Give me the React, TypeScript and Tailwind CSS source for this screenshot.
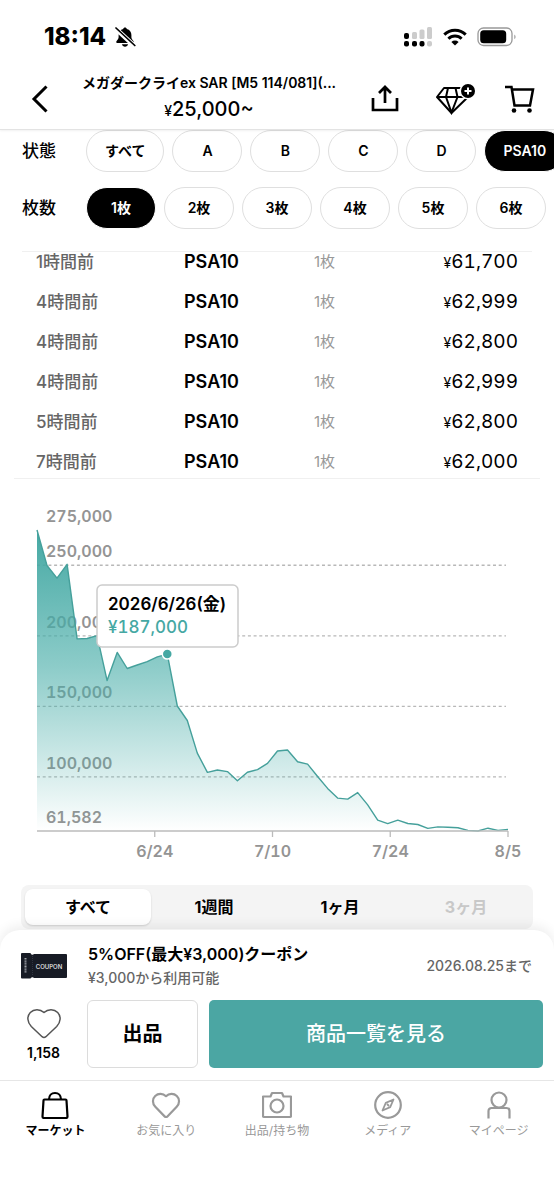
import { useState } from "react";
import type { ReactNode } from "react";

const CONDITIONS = ["すべて", "A", "B", "C", "D", "PSA10"];
const QUANTITIES = ["1枚", "2枚", "3枚", "4枚", "5枚", "6枚"];

const SALES = [
  { time: "1時間前", grade: "PSA10", count: "1枚", price: "61,700" },
  { time: "4時間前", grade: "PSA10", count: "1枚", price: "62,999" },
  { time: "4時間前", grade: "PSA10", count: "1枚", price: "62,800" },
  { time: "4時間前", grade: "PSA10", count: "1枚", price: "62,999" },
  { time: "5時間前", grade: "PSA10", count: "1枚", price: "62,800" },
  { time: "7時間前", grade: "PSA10", count: "1枚", price: "62,000" },
];

const PRICES = [
  275000, 249800, 240900, 250700, 197800, 198100, 200100, 168200, 188200, 176800, 179300, 181700,
  185000, 187000, 150200, 139900, 116800, 103100, 104800, 103700, 97200, 103300, 105100, 109500,
  118300, 119000, 110700, 109000, 100200, 91800, 84900, 84200, 88800, 80100, 69300, 66800, 69300,
  66900, 66200, 63400, 64500, 64300, 63900, 62000, 61582, 63600, 62000, 62700,
];

const Y_LABELS = [275000, 250000, 200000, 150000, 100000, 61582];
const X_LABELS = ["6/24", "7/10", "7/24", "8/5"];
const RANGES = ["すべて", "1週間", "1ヶ月", "3ヶ月"];

/* ── Chart geometry ── */
const LEFT = 37;
const RIGHT = 508;
const TOP = 51;
const BOTTOM = 352;
const MAX = 275000;
const MIN = 61582;
const SELECTED = 13;

const toX = (i: number) => LEFT + (i * (RIGHT - LEFT)) / (PRICES.length - 1);
const toY = (price: number) => BOTTOM - ((price - MIN) / (MAX - MIN)) * (BOTTOM - TOP);

function StatusBar() {
  return (
    <div className="flex h-[73px] items-center justify-between pl-11 pr-[37px]">
      <div className="flex items-center gap-2">
        <span className="text-2xl font-extrabold leading-7">18:14</span>
        <svg width="22" height="22" viewBox="0 0 22 22" aria-label="消音">
          <path
            d="M11 1.5c.9 0 1.6.6 1.8 1.4 3 .8 4.6 3 4.6 6v2.5c0 2 2.4 3.1 2.4 4.7 0 .6-.4.9-1 .9H3.2c-.6 0-1-.3-1-.9 0-1.6 2.4-2.7 2.4-4.7V8.900c0-3 1.6-5.2 4.6-6C9.400 2.100 10.100 1.500 11 1.500z"
            fill="#000"
          />
          <path d="M7.900 18.300h6.200c-.4 1.500-1.600 2.400-3.100 2.400s-2.700-.9-3.100-2.400z" fill="#000" />
          <path d="M1.500 2.500l18.500 17" stroke="#fff" strokeWidth="4.500" />
          <path d="M2 2l18.800 17.500" stroke="#000" strokeWidth="1.700" strokeLinecap="round" />
        </svg>
      </div>
      <div className="flex items-center gap-[10px]">
        <svg width="29" height="20" viewBox="0 0 29 20" aria-hidden="true">
          <rect x="0" y="6" width="5" height="6" rx="2" />
          <rect x="8" y="5" width="5" height="7" rx="1.500" fill="#ccc" />
          <rect x="15.500" y="2.500" width="5" height="9.500" rx="1.500" fill="#ccc" />
          <rect x="23" y="0" width="5" height="12" rx="1.500" fill="#ccc" />
          <rect x="0" y="14" width="5" height="5.500" rx="2" />
          <rect x="8" y="14" width="5" height="5.500" rx="2" />
          <rect x="15.500" y="14" width="5" height="5.500" rx="2" />
          <rect x="23" y="14" width="5" height="5.500" rx="2" fill="#ccc" />
        </svg>
        <svg width="24" height="18" viewBox="0 0 24 18" aria-hidden="true">
          <g fill="none" stroke="#000" strokeWidth="3">
            <path d="M1.300 6.600a15.200 15.200 0 0 1 21.400 0" />
            <path d="M5.400 10.800a9.400 9.400 0 0 1 13.200 0" />
          </g>
          <path d="M12 17.500l-3.600-3.600a5.100 5.100 0 0 1 7.200 0z" />
        </svg>
        <svg width="40" height="20" viewBox="0 0 40 20" aria-hidden="true">
          <rect x="1" y="1" width="34" height="17.500" rx="5.500" fill="none" stroke="#999" strokeWidth="1.300" />
          <rect x="3.200" y="3.200" width="26" height="13" rx="3.500" />
          <path d="M37.300 7.500c1.700.8 1.700 4 0 4.800z" fill="#999" />
        </svg>
      </div>
    </div>
  );
}

function Header() {
  return (
    <header className="relative border-b border-[#e3e3e3] bg-white shadow-[0_1px_2px_rgba(0,0,0,0.06)]">
      <StatusBar />
      <div className="flex h-14 items-center pb-1 pl-[31px] pr-[19px]">
        <button type="button" aria-label="戻る">
          <svg width="18" height="28" viewBox="0 0 18 28" fill="none" stroke="#000" strokeWidth="3">
            <path d="M15.500 1.500L3 14l12.500 12.500" />
          </svg>
        </button>
        <div className="ml-7 flex-1 text-center">
          <h1 className="whitespace-nowrap text-sm font-semibold leading-5">
            メガダークライex SAR [M5 114/081](...
          </h1>
          <p className="text-xl font-medium leading-8">
            <span className="text-sm leading-none">¥</span>25,000~
          </p>
        </div>
        <div className="ml-[30px] flex items-center">
          <button type="button" aria-label="共有">
            <svg width="28" height="28" viewBox="0 0 28 28" fill="none" stroke="#000" strokeWidth="2.700">
              <path d="M2 13v12h24V13M14 18V2.500M8 8l6-6 6 6" />
            </svg>
          </button>
          <button type="button" aria-label="コレクションに追加" className="ml-9">
            <svg width="42" height="32" viewBox="0 0 42 32" fill="none" stroke="#000" strokeWidth="2">
              <path d="M9 5h18l6 9-16.500 16L2 14z" strokeLinejoin="round" />
              <path d="M2 14h31M13 5l-2 9 5.500 15.500L22.500 14 20.500 5" />
              <circle cx="33" cy="8" r="8.500" fill="#fff" stroke="none" />
              <circle cx="33" cy="8" r="7" fill="#000" stroke="none" />
              <path d="M33 4.500v7M29.500 8h7" stroke="#fff" />
            </svg>
          </button>
          <button type="button" aria-label="カート" className="ml-7">
            <svg width="30" height="30" viewBox="0 0 30 30" fill="none" stroke="#000" strokeWidth="2.500">
              <path d="M0 3h6.500l3 18.500h15.500L28 5.500H7.500" />
              <circle cx="9" cy="26.500" r="2.300" fill="#000" stroke="none" />
              <circle cx="24.500" cy="26.500" r="2.300" fill="#000" stroke="none" />
            </svg>
          </button>
        </div>
      </div>
    </header>
  );
}

function FilterRow({
  label,
  options,
  value,
  onChange,
}: {
  label: string;
  options: string[];
  value: string;
  onChange: (v: string) => void;
}) {
  return (
    <div className="flex items-center overflow-hidden pl-[22px]" role="group" aria-label={label}>
      <span className="w-16 shrink-0 text-[17px] font-medium leading-6">{label}</span>
      <div className="flex gap-2">
        {options.map((option) => (
          <button
            key={option}
            type="button"
            aria-pressed={option === value}
            onClick={() => onChange(option)}
            className={`h-[42px] min-w-[70px] shrink-0 rounded-full border px-[18px] text-sm font-semibold ${
              option === value ? "border-white bg-black text-white" : "border-[#dfdfdf] bg-white"
            }`}
          >
            {option}
          </button>
        ))}
      </div>
    </div>
  );
}

function SalesTable() {
  return (
    <div className="mx-[14px] mt-[22px] border-b border-[#f0f0f0] pb-[6px]">
      <div className="mx-2 border-t border-[#f0f0f0]">
        <table className="w-full table-fixed">
          <tbody>
            {SALES.map((sale, i) => (
              <tr key={i} className="align-top [&>td]:pb-5 last:[&>td]:pb-0">
                <td className="w-[162px] pl-[14px] text-[17px] font-medium leading-5 text-[#666]">{sale.time}</td>
                <td className="w-[130px] text-lg font-semibold leading-5">{sale.grade}</td>
                <td className="text-[15px] leading-5 text-[#999]">{sale.count}</td>
                <td className="pr-[14px] text-right text-[19px] leading-5 tabular-nums">
                  <span className="text-sm leading-none">¥</span>
                  {sale.price}
                </td>
              </tr>
            ))}
          </tbody>
        </table>
      </div>
    </div>
  );
}

function PriceChart() {
  const line = PRICES.map((p, i) => `${toX(i).toFixed(1)},${toY(p).toFixed(1)}`).join(" ");
  const step = (RIGHT - LEFT) / X_LABELS.length;
  const dotX = toX(SELECTED);
  const dotY = toY(PRICES[SELECTED]);

  return (
    <svg viewBox="0 0 554 391" className="block w-full tabular-nums" role="img" aria-label="価格推移">
      <defs>
        <linearGradient id="area" x1="0" y1="0" x2="0" y2="1">
          <stop offset="0" stopColor="#45a8a3" />
          <stop offset="0.45" stopColor="#45aca7" stopOpacity="0.62" />
          <stop offset="1" stopColor="#45aca7" stopOpacity="0" />
        </linearGradient>
      </defs>

      {/* labels and grid sit under the translucent fill */}
      <g fill="#949494" className="text-base font-semibold">
        {Y_LABELS.map((p) => (
          <text key={p} x="46" y={toY(p) - 8}>
            {p.toLocaleString("en-US")}
          </text>
        ))}
      </g>
      {Y_LABELS.slice(1, 5).map((p) => (
        <line
          key={p}
          x1={LEFT}
          x2={RIGHT - 2}
          y1={toY(p)}
          y2={toY(p)}
          stroke="#b8b8b8"
          strokeWidth="1.300"
          strokeDasharray="3 2.700"
        />
      ))}
      <polygon points={`${LEFT},${BOTTOM} ${line} ${RIGHT},${BOTTOM}`} fill="url(#area)" />
      <polyline points={line} fill="none" stroke="#45a09b" strokeWidth="1.400" strokeLinejoin="round" />

      <path d={`M${LEFT} ${BOTTOM}H${RIGHT}`} stroke="#bbb" strokeWidth="1.300" />
      {X_LABELS.map((label, i) => (
        <g key={label}>
          <path d={`M${LEFT + step * (i + 1)} ${BOTTOM}v6`} stroke="#bbb" strokeWidth="1.300" />
          <text
            x={LEFT + step * (i + 1)}
            y="378"
            textAnchor="middle"
            fill="#949494"
            className="text-base font-semibold"
          >
            {label}
          </text>
        </g>
      ))}

      <circle cx={dotX} cy={dotY} r="5" fill="#45a8a3" stroke="#fff" strokeWidth="1.500" />
      <rect x="97" y="106" width="141" height="62" rx="5" fill="#fff" stroke="#ccc" strokeWidth="1.500" />
      <text x="108" y="131" className="text-[17px] font-semibold proportional-nums">
        2026/6/26(金)
      </text>
      <text x="108" y="154" fill="#45a8a3" className="text-[17px] font-medium">
        ¥187,000
      </text>
    </svg>
  );
}

function RangeTabs({ value, onChange }: { value: string; onChange: (v: string) => void }) {
  return (
    <div className="mx-[21px] mt-[15px] grid grid-cols-4 rounded-lg bg-[#f4f4f4] p-1">
      {RANGES.map((range) => (
        <button
          key={range}
          type="button"
          disabled={range === "3ヶ月"}
          onClick={() => onChange(range)}
          className={`h-9 rounded-lg text-base font-bold disabled:text-[#c8c8c8] ${
            range === value ? "bg-white shadow-[0_1px_2px_rgba(0,0,0,0.15)]" : ""
          }`}
        >
          {range}
        </button>
      ))}
    </div>
  );
}

function CouponIcon() {
  return (
    <svg width="46" height="26" viewBox="0 0 46 26" aria-hidden="true">
      <path
        d="M1 0h8.500a2 2 0 0 0 3.500 1H45a1 1 0 0 1 1 1v22a1 1 0 0 1-1 1H13a2 2 0 0 0-3.500.500H1a1 1 0 0 1-1-1V1a1 1 0 0 1 1-1z"
        fill="#171b25"
      />
      <path d="M11.500 3v20" stroke="#3a3f4c" strokeWidth="0.700" strokeDasharray="1 1" />
      <path d="M4.500 5v15" stroke="#a0a3aa" strokeWidth="2" strokeDasharray="1 0.600" />
      <text x="28" y="15.500" textAnchor="middle" fill="#eee" fontSize="6" fontWeight="500">
        COUPON
      </text>
    </svg>
  );
}

function ActionSheet() {
  return (
    <section className="rounded-t-[20px] bg-white pt-3 shadow-[0_-4px_12px_rgba(0,0,0,0.07)]">
      <div className="flex items-center pl-[21px] pr-[22px]">
        <CouponIcon />
        <div className="ml-[21px] flex-1">
          <p className="text-base font-semibold leading-6">5%OFF(最大¥3,000)クーポン</p>
          <p className="text-sm font-medium leading-6 text-[#666]">¥3,000から利用可能</p>
        </div>
        <p className="text-sm font-medium leading-6 text-[#666]">2026.08.25まで</p>
      </div>
      <div className="flex pb-3 pr-[11px] pt-[10px]">
        <button type="button" className="flex w-[87px] flex-col items-center pt-2">
          <svg width="34" height="31" viewBox="0 0 34 31" fill="none" stroke="#555" strokeWidth="1.500">
            <path
              d="M17 29.500c-.7 0-1.300-.3-1.900-.8L4.300 18.500C.2 14.200-.3 8.200 3.300 4.400 6.900.7 13 .7 17 4.500c4-3.800 10.100-3.800 13.700-.1 3.600 3.800 3.100 9.800-1 14.100L18.900 28.700c-.6.5-1.200.8-1.900.8z"
              strokeLinejoin="round"
            />
          </svg>
          <span className="mt-1 text-sm font-semibold leading-5">1,158</span>
        </button>
        <button
          type="button"
          className="h-[68px] w-[111px] rounded-md border border-[#dcdcdc] text-xl font-semibold"
        >
          出品
        </button>
        <button
          type="button"
          className="ml-[11px] h-[68px] flex-1 rounded-[5px] bg-[#4ba6a3] text-xl font-medium text-white"
        >
          商品一覧を見る
        </button>
      </div>
    </section>
  );
}

function NavItem({ label, active, children }: { label: string; active?: boolean; children: ReactNode }) {
  return (
    <a
      href="#"
      aria-current={active ? "page" : undefined}
      className={`flex flex-col items-center gap-1 text-xs leading-4 ${
        active ? "font-semibold text-black" : "text-[#999]"
      }`}
    >
      <svg width="30" height="28" viewBox="0 0 30 28" fill="none" stroke="currentColor" strokeWidth="2.200">
        {children}
      </svg>
      {label}
    </a>
  );
}

function BottomNav() {
  return (
    <nav className="grid grid-cols-5 border-t border-[#e6e6e6] bg-white pb-[60px] pt-[10px]">
      <NavItem label="マーケット" active>
        <path d="M4.500 8.500h21a1 1 0 0 1 1 1l1 16a1.500 1.500 0 0 1-1.500 1.500H4a1.500 1.500 0 0 1-1.500-1.500l1-16a1 1 0 0 1 1-1z" />
        <path d="M9 8.500C9 4.500 11.500 2 15 2s6 2.500 6 6.500" />
      </NavItem>
      <NavItem label="お気に入り">
        <path
          d="M15 26c-.5 0-1-.2-1.400-.6L4.300 15.800C1.200 12.600 1.200 7.800 4.200 5c3-2.900 7.700-2.800 10.800.2C18.100 2.200 22.800 2.100 25.800 5c3 2.800 3 7.600-.1 10.800l-9.300 9.600c-.4.4-.9.6-1.400.6z"
          strokeLinejoin="round"
        />
      </NavItem>
      <NavItem label="出品/持ち物">
        <path
          d="M1 5.500h7.500L10 2h10l1.500 3.500H29V25a1 1 0 0 1-1 1H2a1 1 0 0 1-1-1z"
          strokeLinejoin="round"
        />
        <circle cx="15" cy="15" r="6.500" />
      </NavItem>
      <NavItem label="メディア">
        <circle cx="15" cy="14" r="12.800" />
        <path d="M20.500 8.500l-3.300 7.700-7.700 3.300 3.300-7.700zM14 13l2 2" strokeWidth="1.800" strokeLinejoin="round" />
      </NavItem>
      <NavItem label="マイページ">
        <circle cx="15" cy="9" r="7.500" />
        <path d="M4.500 27.500V20a3 3 0 0 1 3-3h15a3 3 0 0 1 3 3v7.500" />
      </NavItem>
    </nav>
  );
}

export default function App() {
  const [condition, setCondition] = useState("PSA10");
  const [quantity, setQuantity] = useState("1枚");
  const [range, setRange] = useState("すべて");

  return (
    <div className="min-h-screen bg-white font-['Inter','Noto_Sans_CJK_JP',sans-serif] text-black">
      <Header />
      <main className="pb-px">
        <div className="flex flex-col gap-[15px]">
          <FilterRow label="状態" options={CONDITIONS} value={condition} onChange={setCondition} />
          <FilterRow label="枚数" options={QUANTITIES} value={quantity} onChange={setQuantity} />
        </div>
        <SalesTable />
        <PriceChart />
        <RangeTabs value={range} onChange={setRange} />
      </main>
      <footer className="sticky bottom-0">
        <ActionSheet />
        <BottomNav />
      </footer>
    </div>
  );
}
